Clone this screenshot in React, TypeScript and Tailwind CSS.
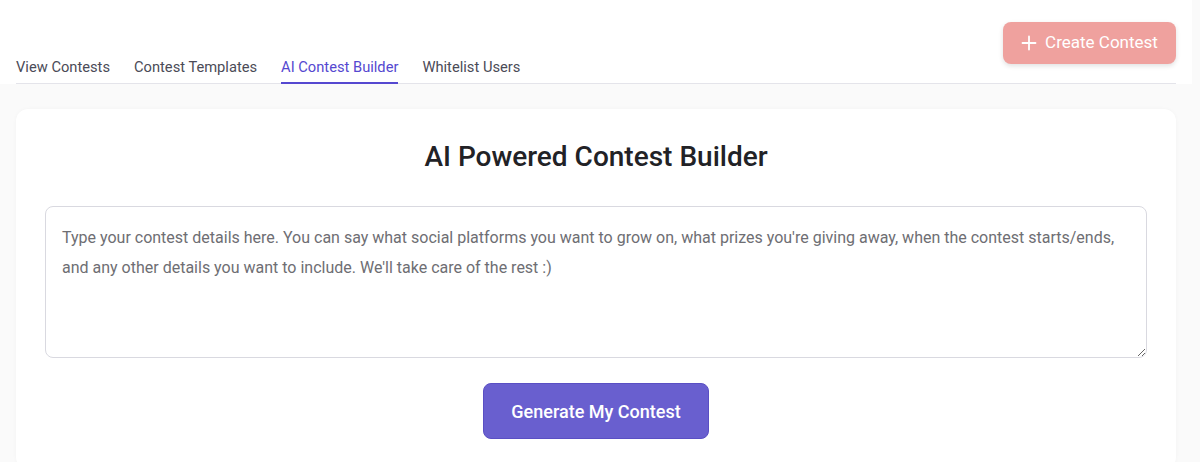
import React from "react";

export default function App() {
  const tabs = ["View Contests", "Contest Templates", "AI Contest Builder", "Whitelist Users"];
  return (
    <div className="w-[1200px] h-[462px] overflow-hidden bg-[#fafafa]" style={{ fontFamily: "Roboto, 'Noto Sans', sans-serif" }}>
      <div className="w-[1192px]">
        <div className="bg-white pt-[22px] px-[16px]">
          <div className="flex items-start justify-between">
            <div className="flex gap-[24px] pt-[34px]">
              {tabs.map((t, i) => (
                <div key={t} className="flex flex-col">
                  <span className={`text-[14.7px] leading-[22px] ${i === 2 ? "text-[#5548d0]" : "text-[#4b4b57]"}`}>{t}</span>
                  <div className={`mt-[4px] h-[2px] ${i === 2 ? "bg-[#5548d0]" : "bg-transparent"}`} />
                </div>
              ))}
            </div>
            <button className="flex h-[42px] w-[173px] items-center justify-center gap-[8px] rounded-[8px] bg-[#efa19e] text-[17px] text-white shadow-[0_2px_5px_rgba(0,0,0,0.12)]">
              <svg width="16" height="16" viewBox="0 0 16 16" fill="none" stroke="white" strokeWidth="1.8" strokeLinecap="round">
                <path d="M8 1.5v13M1.5 8h13" />
              </svg>
              Create Contest
            </button>
          </div>
          <div className="h-[1px] bg-[#e4e4ea] -mt-[1px]" />
        </div>
        <div className="px-[16px] pt-[25px]">
          <div className="rounded-[12px] bg-white px-[29px] pt-[31px] pb-[30px] shadow-[0_0_4px_rgba(0,0,0,0.03)]">
            <h1 className="text-center text-[28px] font-medium leading-[34px] text-[#222226]">AI Powered Contest Builder</h1>
            <textarea
              className="mt-[32px] block h-[152px] w-full resize-y rounded-[8px] border border-[#d9d9e0] px-[16px] py-[16px] text-[16px] leading-[30px] text-[#333] placeholder:text-[#6e6e73] outline-none"
              placeholder="Type your contest details here. You can say what social platforms you want to grow on, what prizes you're giving away, when the contest starts/ends, and any other details you want to include. We'll take care of the rest :)"
            />
            <div className="mt-[25px] flex justify-center">
              <button className="h-[56px] w-[226px] rounded-[8px] border border-[#5a4fc4] bg-[#695fcf] text-[18px] font-medium text-white">
                Generate My Contest
              </button>
            </div>
          </div>
        </div>
      </div>
    </div>
  );
}
